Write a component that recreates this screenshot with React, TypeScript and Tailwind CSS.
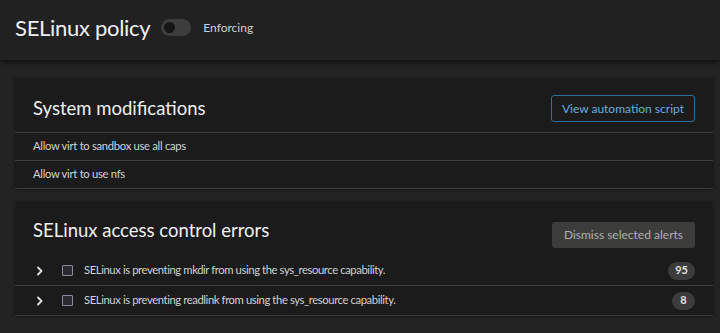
import React from "react";

function Chevron() {
  return (
    <svg width="8" height="10" viewBox="0 0 8 10" className="shrink-0">
      <path d="M2 1.5 L5.5 5 L2 8.5" fill="none" stroke="#e0e0e0" strokeWidth="1.8" strokeLinecap="round" strokeLinejoin="round" />
    </svg>
  );
}

function Row({ text, count }: { text: string; count: string }) {
  return (
    <div className="flex items-center h-[30px] pl-[21px] pr-[18px] border-b border-[#3c3c3c]">
      <Chevron />
      <div className="ml-[18px] w-[11px] h-[11px] border border-[#8a8a9a] bg-[#2a2a30] rounded-[1px]" />
      <span className="ml-[11px] text-[11.25px] tracking-[-0.4px] text-[#d2d2d2] flex-1">{text}</span>
      <span className="rounded-full bg-[#3c3c3c] text-[#e0e0e0] text-[11px] font-bold h-[18px] min-w-[23px] px-[7px] flex items-center justify-center">{count}</span>
    </div>
  );
}

export default function App() {
  return (
    <div className="w-[720px] h-[333px] overflow-hidden bg-[#232323]" style={{ fontFamily: "Lato, 'Noto Sans', sans-serif" }}>
      <header className="h-[60px] bg-[#212121] flex items-center pl-[15px] pb-[5px] shadow-[0_3px_4px_rgba(0,0,0,0.45)] relative">
        <h1 className="text-[22px] tracking-[-0.3px] text-[#f0f0f0] leading-none">SELinux policy</h1>
        <div className="ml-[11px] w-[30px] h-[17px] rounded-full bg-[#3d3d3d] flex items-center px-[3px]">
          <div className="w-[11px] h-[11px] rounded-full bg-[#151515]" />
        </div>
        <span className="ml-[12px] text-[12px] text-[#d0d0d0]">Enforcing</span>
      </header>
      <main className="pt-[18px] pl-[15px] pr-[7px] flex flex-col gap-[12px]">
        <section className="bg-[#1b1b1b] shadow-[0_1px_3px_rgba(0,0,0,0.4)]">
          <div className="flex items-center justify-between h-[55px] pt-[7px] pl-[18px] pr-[18px] border-b border-[#3c3c3c]">
            <h2 className="text-[18.5px] text-[#f0f0f0]">System modifications</h2>
            <button className="h-[27px] px-[10px] border border-[#2b6f9a] rounded-[3px] text-[12px] text-[#6aaedb]">View automation script</button>
          </div>
          <div className="h-[28px] flex items-center pl-[18px] text-[11.25px] tracking-[-0.3px] text-[#d2d2d2] border-b border-[#3c3c3c]">Allow virt to sandbox use all caps</div>
          <div className="h-[28px] flex items-center pl-[18px] text-[11.25px] tracking-[-0.3px] text-[#d2d2d2] border-b border-[#3c3c3c]">Allow virt to use nfs</div>
        </section>
        <section className="bg-[#1b1b1b] shadow-[0_1px_3px_rgba(0,0,0,0.4)]">
          <div className="flex items-center justify-between h-[55px] pt-[4px] pl-[18px] pr-[18px]">
            <h2 className="text-[18.5px] text-[#f0f0f0]">SELinux access control errors</h2>
            <button className="h-[26px] px-[12px] rounded-[3px] bg-[#3c3c3a] text-[12px] text-[#b0b0b0] self-start mt-[17px]">Dismiss selected alerts</button>
          </div>
          <Row text="SELinux is preventing mkdir from using the sys_resource capability." count="95" />
          <Row text="SELinux is preventing readlink from using the sys_resource capability." count="8" />
        </section>
      </main>
    </div>
  );
}
